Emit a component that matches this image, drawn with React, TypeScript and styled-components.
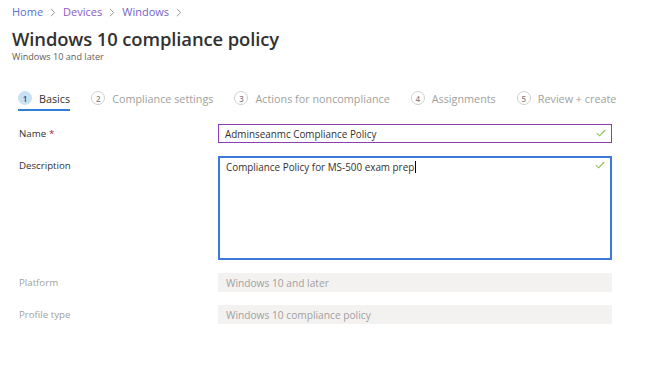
import React from "react";
import styled, { createGlobalStyle } from "styled-components";

const Global = createGlobalStyle`
  html, body { margin: 0; padding: 0; background: #ffffff; }
  body { font-family: "Open Sans", "Noto Sans", sans-serif; color: #323130; }
`;

const Page = styled.div`
  width: 657px;
  height: 389px;
  padding: 4px 0 0 12px;
  box-sizing: border-box;
`;

const Breadcrumb = styled.nav`
  display: flex;
  align-items: center;
  gap: 7px;
  font-size: 11px;
  line-height: 16px;
`;

const Crumb = styled.a<{ $c: string }>`
  color: ${(p) => p.$c};
  text-decoration: none;
`;

const Sep = styled.svg`
  display: block;
`;

const Chevron = () => (
  <Sep width="6" height="9" viewBox="0 0 6 9">
    <path d="M1 0.8 L4.6 4.5 L1 8.2" fill="none" stroke="#8a8886" strokeWidth="0.9" />
  </Sep>
);

const Title = styled.h1`
  margin: 8px 0 0 0;
  font-size: 18.4px;
  font-weight: 600;
  line-height: 22px;
  color: #323130;
  letter-spacing: -0.1px;
`;

const Subtitle = styled.div`
  margin-top: 1px;
  font-size: 9.1px;
  line-height: 12px;
  color: #605e5c;
`;

const Steps = styled.div`
  display: flex;
  align-items: flex-start;
  margin: 27px 0 0 6px;
  gap: 21px;
`;

const Step = styled.div<{ $active?: boolean }>`
  display: flex;
  align-items: center;
  gap: 7px;
  height: 16px;
  padding-bottom: 3px;
  border-bottom: 2px solid ${(p) => (p.$active ? "#2f7fd8" : "transparent")};
  font-size: 10.8px;
  color: ${(p) => (p.$active ? "#323130" : "#a19f9d")};
`;

const Num = styled.span<{ $active?: boolean }>`
  width: 14px;
  height: 14px;
  border-radius: 50%;
  box-sizing: border-box;
  display: flex;
  align-items: center;
  justify-content: center;
  font-size: 8px;
  font-weight: 600;
  background: ${(p) => (p.$active ? "#c7e0f4" : "#ffffff")};
  border: 1px solid ${(p) => (p.$active ? "#c7e0f4" : "#d2d0ce")};
  color: ${(p) => (p.$active ? "#1b4d8a" : "#8a8886")};
`;

const Form = styled.div`
  display: grid;
  grid-template-columns: 199px 394px;
  row-gap: 13px;
  margin: 13px 0 0 7px;
`;

const Label = styled.div<{ $disabled?: boolean; $top?: boolean }>`
  font-size: 9.7px;
  color: ${(p) => (p.$disabled ? "#a19f9d" : "#323130")};
  display: flex;
  align-items: ${(p) => (p.$top ? "flex-start" : "center")};
  padding-top: ${(p) => (p.$top ? "3px" : "0")};
`;

const Star = styled.span`
  color: #a4262c;
  margin-left: 3px;
`;

const Field = styled.div<{ $border: string; $width: number; $height: number; $top?: boolean }>`
  position: relative;
  height: ${(p) => p.$height}px;
  box-sizing: border-box;
  border: ${(p) => p.$width}px solid ${(p) => p.$border};
  background: #ffffff;
  display: flex;
  align-items: ${(p) => (p.$top ? "flex-start" : "center")};
  padding: ${(p) => (p.$top ? "2px 6px" : "0 6px")};
  font-size: 9.9px;
  color: #323130;
`;

const Disabled = styled.div`
  height: 19px;
  background: #f3f2f1;
  border-radius: 1px;
  display: flex;
  align-items: center;
  padding: 0 8px;
  font-size: 10.2px;
  color: #a19f9d;
`;

const Caret = styled.span`
  display: inline-block;
  width: 1px;
  height: 12px;
  background: #000;
  margin-left: 1px;
  vertical-align: -2px;
`;

const Check = styled.svg<{ $top?: number }>`
  position: absolute;
  right: 5px;
  top: ${(p) => p.$top ?? 5}px;
`;

const CheckIcon = ({ top }: { top?: number }) => (
  <Check $top={top} width="10" height="8" viewBox="0 0 10 8">
    <path d="M0.8 4.2 L3.6 6.8 L9.2 1" fill="none" stroke="#8dc24f" strokeWidth="1.1" />
  </Check>
);

const steps = [
  "Basics",
  "Compliance settings",
  "Actions for noncompliance",
  "Assignments",
  "Review + create",
];

export default function App() {
  return (
    <>
      <Global />
      <Page>
        <Breadcrumb>
          <Crumb $c="#5a6fd2">Home</Crumb>
          <Chevron />
          <Crumb $c="#8b5bc6">Devices</Crumb>
          <Chevron />
          <Crumb $c="#7560cc">Windows</Crumb>
          <Chevron />
        </Breadcrumb>
        <Title>Windows 10 compliance policy</Title>
        <Subtitle>Windows 10 and later</Subtitle>
        <Steps>
          {steps.map((s, i) => (
            <Step key={s} $active={i === 0}>
              <Num $active={i === 0}>{i + 1}</Num>
              {s}
            </Step>
          ))}
        </Steps>
        <Form>
          <Label>
            Name<Star>*</Star>
          </Label>
          <Field $border="#8a3fb6" $width={1} $height={19}>
            Adminseanmc Compliance Policy
            <CheckIcon top={4} />
          </Field>
          <Label $top>Description</Label>
          <Field $border="#3a79d6" $width={2} $height={104} $top>
            <span>
              Compliance Policy for MS-500 exam prep
              <Caret />
            </span>
            <CheckIcon top={3} />
          </Field>
          <Label $disabled>Platform</Label>
          <Disabled>Windows 10 and later</Disabled>
          <Label $disabled>Profile type</Label>
          <Disabled>Windows 10 compliance policy</Disabled>
        </Form>
      </Page>
    </>
  );
}
